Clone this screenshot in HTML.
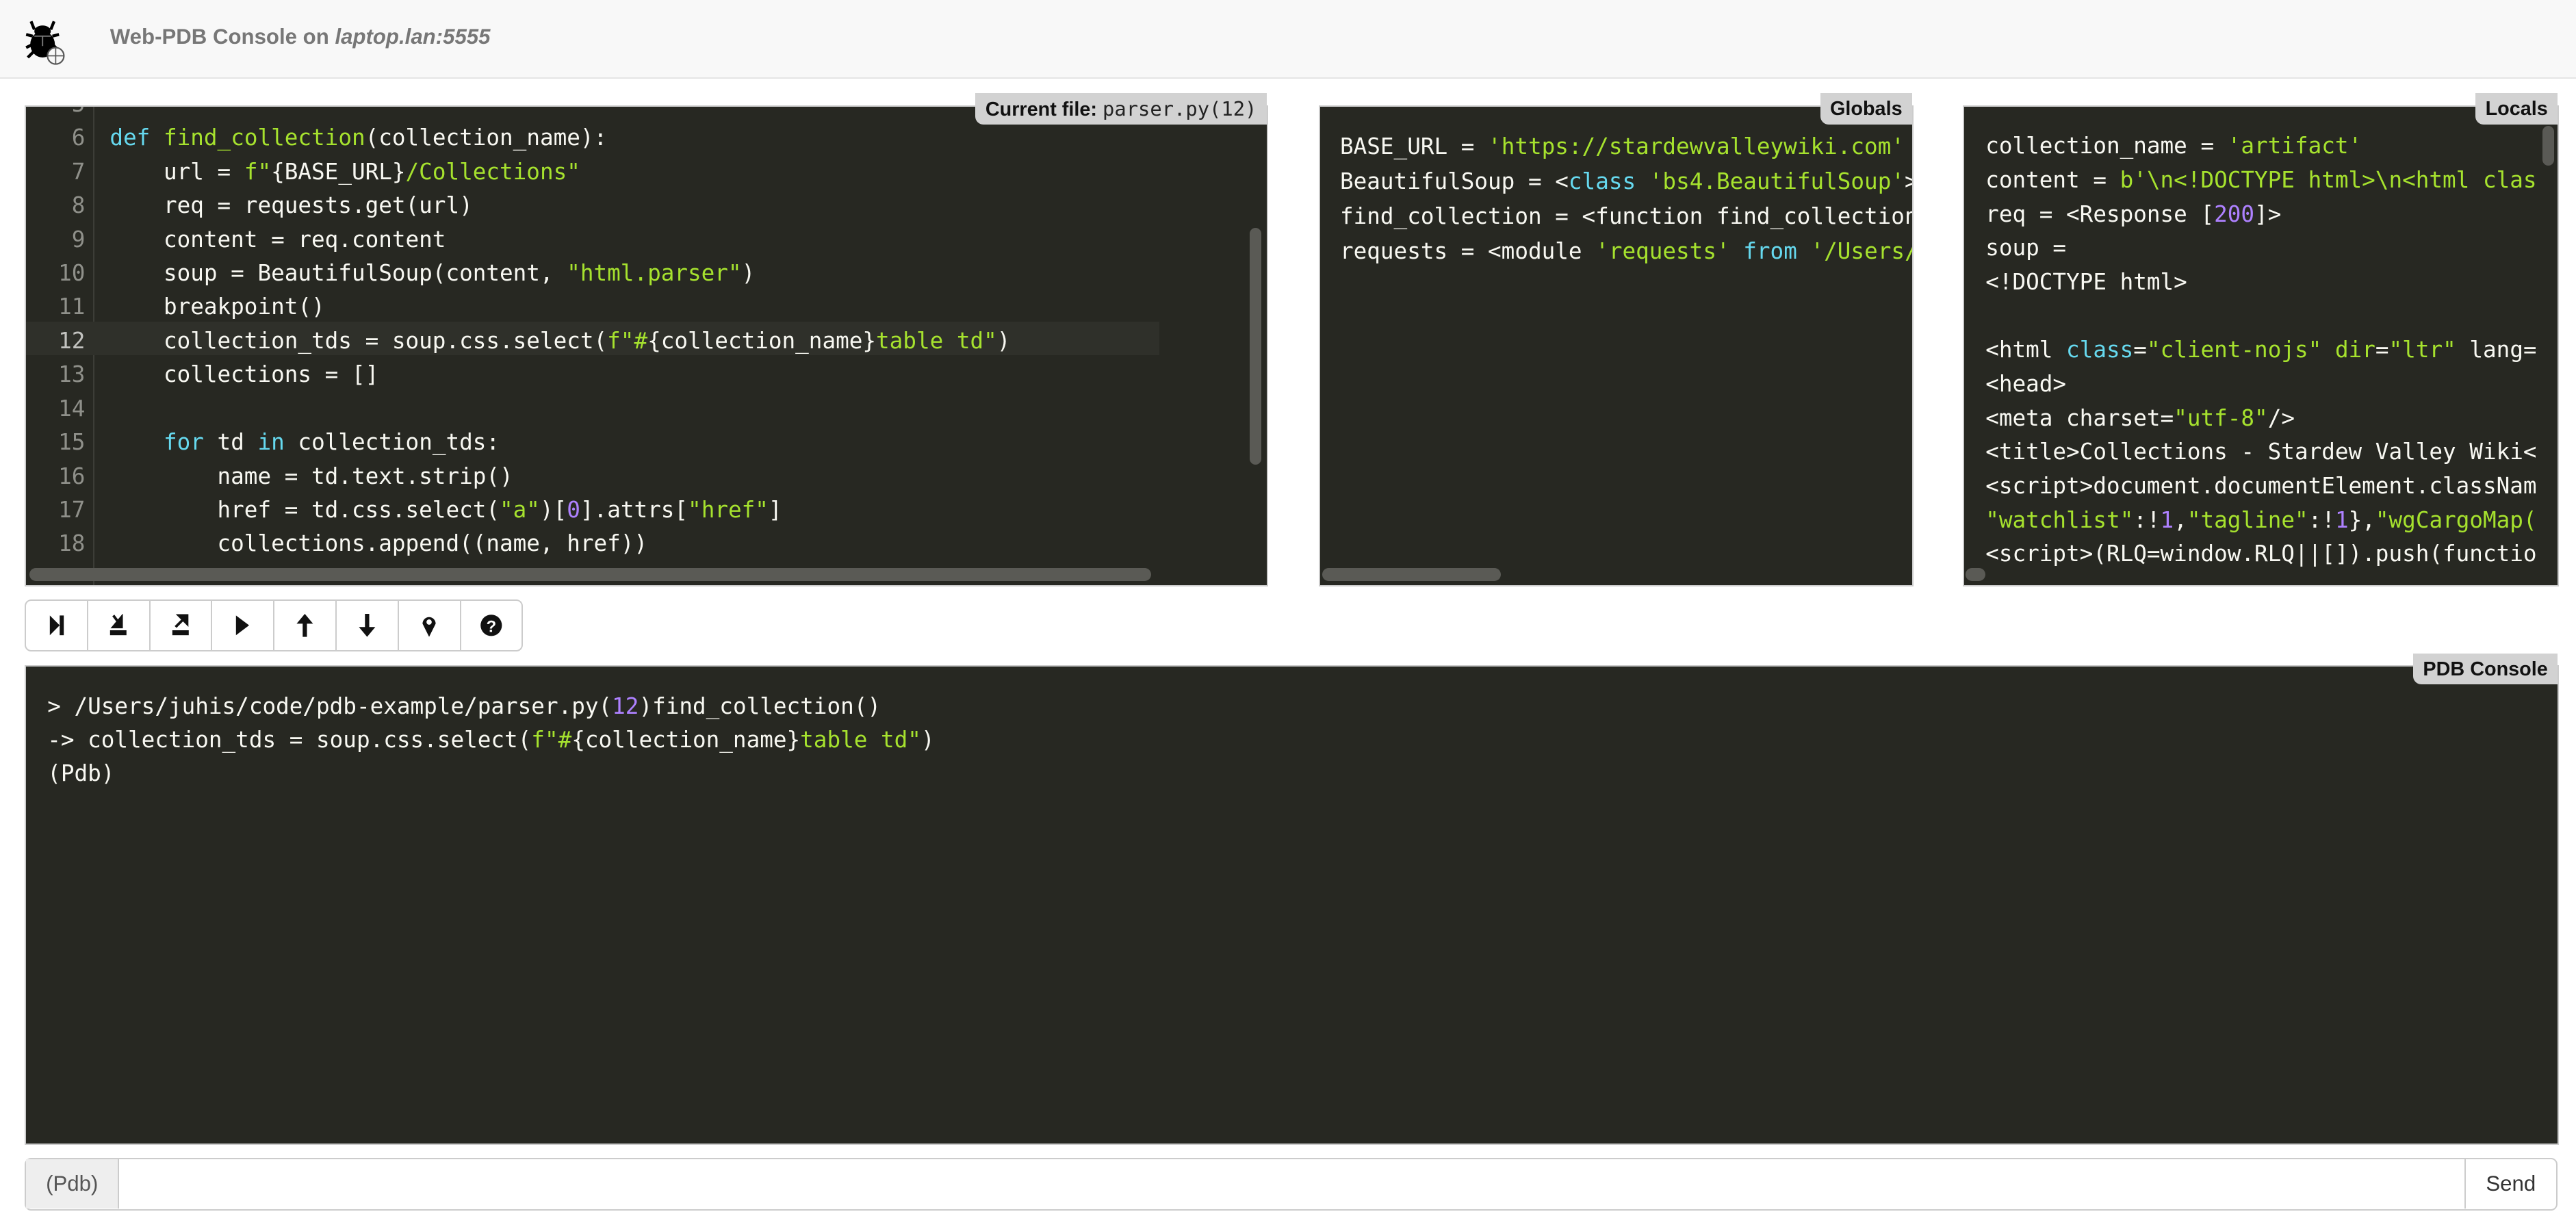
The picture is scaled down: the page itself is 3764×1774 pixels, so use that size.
<!DOCTYPE html>
<html><head><meta charset="utf-8">
<style>
html,body{margin:0;padding:0;background:#fff;overflow:hidden}
#root{zoom:2.4;width:1569px;height:739px;position:relative;font-family:"Liberation Sans",Arial,sans-serif}
.hdr{position:absolute;left:0;top:0;width:1569px;height:47px;background:#f8f8f8;border-bottom:1px solid #e5e5e5}
.title{position:absolute;left:67px;top:15px;font-size:13px;font-weight:bold;color:#777}
.panel{position:absolute;background:#272822;border:1px solid #ccc;box-sizing:border-box;overflow:hidden}
.tab{position:absolute;top:-8px;right:0;background:#d2d2d2;color:#111;font-weight:bold;font-size:12px;padding:2px 6px 2px 6px;border-bottom-left-radius:5px;height:15px;line-height:15px;z-index:3}
.tab .m{font-family:"DejaVu Sans Mono",monospace;font-weight:normal;color:#222}
.mono{font-family:"DejaVu Sans Mono","Liberation Mono",monospace;font-size:13.6px;color:#f8f8f2;white-space:pre;line-height:20.6px}
.k{color:#66d9ef}.f{color:#a6e22e}.s{color:#a6e22e}.n{color:#ae81ff}
.gut{position:absolute;left:0;top:0;width:41px;height:300px;border-right:1px solid #3c3d37}
.hl{position:absolute;left:0;width:690px;height:20.6px;background:#2f302a}
.sbv{position:absolute;background:#5a5a55;border-radius:4px}
.tb{position:absolute;left:15px;top:365px;height:30px;border:1px solid #ccc;border-radius:4px;display:flex;background:#fff}
.tb div{width:37px;height:30px;border-right:1px solid #ccc;display:flex;align-items:center;justify-content:center}
.tb div:last-child{border-right:none}
.inp{position:absolute;left:15px;top:705px;width:1542px;height:32px;border:1px solid #ccc;border-radius:4px;box-sizing:border-box;background:#fff}
</style></head><body><div id="root">
<div class="hdr">
<svg style="position:absolute;left:13px;top:10px" width="28" height="30" viewBox="0 0 28 30">
<path d="M6 3 L8 8 M20 3 L18 8 M3 11 L7 12 M23 11 L19 12 M3 19 L7 17 M4 25 L8 21 M22 20 L19 17" stroke="#000" stroke-width="1.8" fill="none"/>
<ellipse cx="13" cy="9" rx="5" ry="3.5" fill="#000"/>
<ellipse cx="13" cy="17" rx="7.5" ry="8" fill="#000"/>
<path d="M8 12 L18 12 M13 12 L13 18" stroke="#777" stroke-width="0.8"/>
<circle cx="21" cy="24" r="5" fill="#f8f8f8" stroke="#555" stroke-width="0.9"/>
<path d="M16 24 H26 M21 19 V29" stroke="#555" stroke-width="0.7"/>
</svg>
<div class="title">Web-PDB Console on <i>laptop.lan:5555</i></div>
</div>

<!-- code panel -->
<div class="panel" style="left:15px;top:64px;width:757px;height:293px;overflow:visible">
<div class="tab">Current file: <span class="m">parser.py(12)</span></div>
<div style="position:absolute;inset:0;overflow:hidden">
<div class="gut"></div>
<div class="hl" style="top:131px"></div>
<div class="mono" style="position:absolute;left:0;top:-11.6px;width:36px;text-align:right;color:#8f908a">5
6
7
8
9
10
11
<span style="color:#c2c2bf">12</span>
13
14
15
16
17
18</div>
<div class="mono" style="position:absolute;left:51px;top:9px"><span class="k">def</span> <span class="f">find_collection</span>(collection_name):
    url = <span class="s">f"</span>{BASE_URL}<span class="s">/Collections"</span>
    req = requests.get(url)
    content = req.content
    soup = BeautifulSoup(content, <span class="s">"html.parser"</span>)
    breakpoint()
    collection_tds = soup.css.select(<span class="s">f"#</span>{collection_name}<span class="s">table td"</span>)
    collections = []

    <span class="k">for</span> td <span class="k">in</span> collection_tds:
        name = td.text.strip()
        href = td.css.select(<span class="s">"a"</span>)[<span class="n">0</span>].attrs[<span class="s">"href"</span>]
        collections.append((name, href))</div>
<div class="sbv" style="left:745px;top:74px;width:7px;height:144px"></div>
<div class="sbv" style="left:2px;top:281px;width:683px;height:8px"></div>
</div></div>

<!-- globals -->
<div class="panel" style="left:803px;top:64px;width:362px;height:293px;overflow:visible">
<div class="tab">Globals</div>
<div style="position:absolute;inset:0;overflow:hidden">
<div class="mono" style="position:absolute;left:12px;top:14px;line-height:21.2px">BASE_URL = <span class="s">'https://stardewvalleywiki.com'</span>
BeautifulSoup = &lt;<span class="k">class</span> <span class="s">'bs4.BeautifulSoup'</span>&gt;
find_collection = &lt;function find_collection at 0x10
requests = &lt;module <span class="s">'requests'</span> <span class="k">from</span> <span class="s">'/Users/juhis'</span></div>
<div class="sbv" style="left:1px;top:281px;width:109px;height:8px"></div>
</div></div>

<!-- locals -->
<div class="panel" style="left:1195px;top:64px;width:363px;height:293px;overflow:visible">
<div class="tab">Locals</div>
<div style="position:absolute;left:0;top:0;width:348px;height:291px;overflow:hidden">
<div class="mono" style="position:absolute;left:13px;top:14px;line-height:20.7px">collection_name = <span class="s">'artifact'</span>
content = <span class="s">b'\n&lt;!DOCTYPE html&gt;\n&lt;html class</span>
req = &lt;Response [<span class="n">200</span>]&gt;
soup =
&lt;!DOCTYPE html&gt;

&lt;html <span class="k">class</span>=<span class="s">"client-nojs"</span> <span class="s">dir</span>=<span class="s">"ltr"</span> lang=
&lt;head&gt;
&lt;meta charset=<span class="s">"utf-8"</span>/&gt;
&lt;title&gt;Collections - Stardew Valley Wiki&lt;/
&lt;script&gt;document.documentElement.className
<span class="s">"watchlist"</span>:!<span class="n">1</span>,<span class="s">"tagline"</span>:!<span class="n">1</span>},<span class="s">"wgCargoMap(</span>
&lt;script&gt;(RLQ=window.RLQ||[]).push(function</div>
<div class="sbv" style="left:1px;top:281px;width:12px;height:8px"></div>
</div>
<div class="sbv" style="left:352px;top:12px;width:7px;height:24px"></div>
</div>

<!-- toolbar -->
<div class="tb">
<div><svg width="12" height="14" viewBox="0 0 12 14"><path d="M2 1 L8 7 L2 13Z" fill="#111"/><rect x="8" y="1" width="2.5" height="12" fill="#111"/></svg></div>
<div><svg width="14" height="14" viewBox="0 0 14 14"><rect x="2" y="10" width="10" height="3" fill="#111"/><path d="M4 1 L7 5 M9 2 L9 8 L4 8 Z" stroke="#111" stroke-width="1.6" fill="#111"/></svg></div>
<div><svg width="14" height="14" viewBox="0 0 14 14"><rect x="2" y="10" width="10" height="3" fill="#111"/><path d="M4 8 L10 2 M6 1 H11 V6 Z" stroke="#111" stroke-width="1.6" fill="#111"/></svg></div>
<div><svg width="12" height="14" viewBox="0 0 12 14"><path d="M2 1 L10 7 L2 13Z" fill="#111"/></svg></div>
<div><svg width="12" height="14" viewBox="0 0 12 14"><path d="M6 0 L11 6 H7.3 V14 H4.7 V6 H1Z" fill="#111"/></svg></div>
<div><svg width="12" height="14" viewBox="0 0 12 14"><path d="M6 14 L11 8 H7.3 V0 H4.7 V8 H1Z" fill="#111"/></svg></div>
<div><svg width="10" height="14" viewBox="0 0 10 14"><path d="M5 14 L1 6 A4 4 0 1 1 9 6Z" fill="#111"/><circle cx="5" cy="5" r="1.6" fill="#fff"/></svg></div>
<div><svg width="14" height="14" viewBox="0 0 14 14"><circle cx="7" cy="7" r="6.5" fill="#111"/><text x="7" y="11" font-size="10" font-weight="bold" fill="#fff" text-anchor="middle" font-family="Liberation Sans">?</text></svg></div>
</div>

<!-- console -->
<div class="panel" style="left:15px;top:405px;width:1543px;height:292px;overflow:visible">
<div class="tab">PDB Console</div>
<div class="mono" style="position:absolute;left:13px;top:14px">&gt; /Users/juhis/code/pdb-example/parser.py(<span class="n">12</span>)find_collection()
-&gt; collection_tds = soup.css.select(<span class="s">f"#</span>{collection_name}<span class="s">table td"</span>)
(Pdb)</div>
</div>

<div class="inp">
<div style="position:absolute;left:0;top:0;width:56px;height:30px;background:#eee;border-right:1px solid #ccc;font-size:13px;color:#555;line-height:30px;text-align:center">(Pdb)</div>
<div style="position:absolute;right:0;top:0;width:55px;height:30px;border-left:1px solid #ccc;font-size:13px;color:#333;line-height:30px;text-align:center">Send</div>
</div>
</div></body></html>
